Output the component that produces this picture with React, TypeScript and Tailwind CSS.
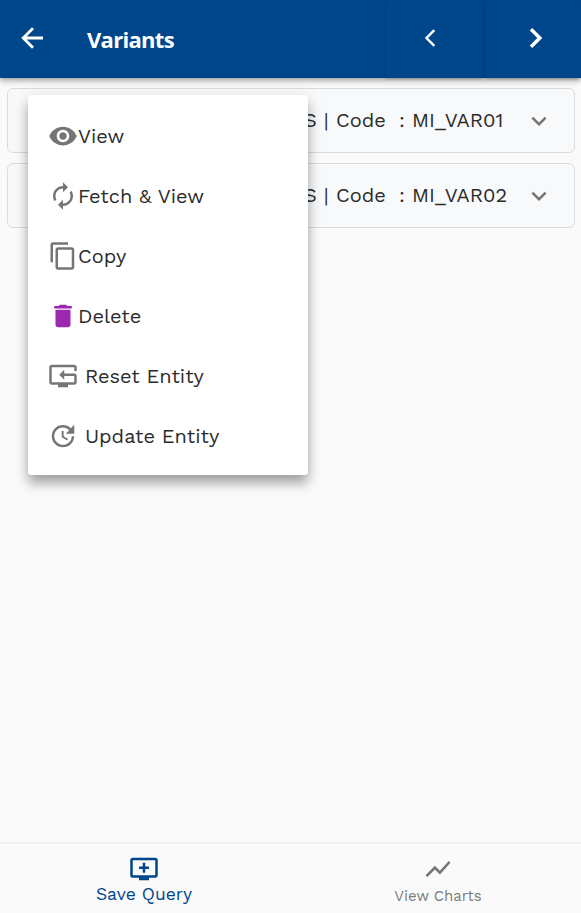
import React from "react";
import {
  MdVisibility, MdAutorenew, MdContentCopy, MdDelete, MdResetTv, MdUpdate,
  MdAddToQueue, MdShowChart, MdExpandMore,
} from "react-icons/md";

const items = [
  { label: "View", icon: MdVisibility, text: "", tint: "text-[#757575]" },
  { label: "Fetch & View", icon: MdAutorenew, text: "", tint: "text-[#757575]" },
  { label: "Copy", icon: MdContentCopy, text: "", tint: "text-[#757575]" },
  { label: "Delete", icon: MdDelete, text: "", tint: "text-[#9c27b0]" },
  { label: "Reset Entity", icon: MdResetTv, text: "ml-[7px]", tint: "text-[#757575]" },
  { label: "Update Entity", icon: MdUpdate, text: "ml-[7px]", tint: "text-[#757575]" },
];

function Variant({ code }: { code: string }) {
  return (
    <div className="flex h-[65px] items-center rounded-[6px] border border-[#d9dbdd] bg-[#f8f9fb] pl-[296px] text-[20px] text-[#2b2b2b]">
      <span className="mt-[-2px] w-[32px] whitespace-pre">S |</span>
      <span className="mt-[-2px] w-[63px]">Code</span>
      <span className="mt-[-2px] w-[13px]">:</span>
      <span className="mt-[-2px] w-[112px] whitespace-nowrap">{code}</span>
      <MdExpandMore className="size-[30px] shrink-0 text-[#757575]" />
    </div>
  );
}

export default function App() {
  return (
    <div className="relative flex h-[913px] w-full flex-col overflow-hidden bg-[#fafafa] font-['Work_Sans',Inter,sans-serif] antialiased">
      <header className="z-10 flex h-[78px] shrink-0 items-center bg-[#00468b] text-white shadow-[0_2px_4px_-1px_rgba(0,0,0,0.2),0_4px_5px_rgba(0,0,0,0.14),0_1px_10px_rgba(0,0,0,0.12)]">
        <svg className="mt-[-2px] ml-4 size-8" viewBox="0 0 32 32" fill="none" stroke="currentColor" strokeWidth="2.8"><path d="M27 16H7.5M17 6.2 7.2 16l9.8 9.8" /></svg>
        <h1 className="ml-[39px] w-[298px] font-['Open_Sans',sans-serif] text-[22px] font-bold tracking-[-0.7px]">Variants</h1>
        <button className="flex h-[78px] w-[99px] items-center justify-center rounded-[4px] pr-[9px] pb-[2px] shadow-[0_1px_3px_rgba(0,0,0,0.2)]">
          <svg className="h-[18px] w-[12px]" viewBox="0 0 12 18" fill="none" stroke="currentColor" strokeWidth="2.4"><path d="M10.3 1.2 2.5 9l7.8 7.8" /></svg>
        </button>
        <button className="ml-px flex h-[78px] flex-1 items-center justify-center rounded-[4px] pb-[2px] pl-[5px] shadow-[0_1px_3px_rgba(0,0,0,0.2)]">
          <svg className="h-[22px] w-[14px]" viewBox="0 0 14 22" fill="none" stroke="currentColor" strokeWidth="3.5"><path d="m2 2.2 8.8 8.8L2 19.8" /></svg>
        </button>
      </header>
      <main className="flex flex-1 flex-col gap-[10px] py-[10px] pr-[6px] pl-[7px]">
        <Variant code="MI_VAR01" />
        <Variant code="MI_VAR02" />
      </main>
      <nav className="flex h-[71px] shrink-0 border-t-2 border-[#f1f1f1]">
        <button className="flex w-[288px] shrink-0 flex-col items-center pt-[10px] text-[#00468b]">
          <MdAddToQueue className="size-[30px]" />
          <span className="mt-[-2px] text-[17.5px] leading-[24px]">Save Query</span>
        </button>
        <button className="flex w-[300px] shrink-0 flex-col items-center pt-[10px] text-[#7c7c7c]">
          <MdShowChart className="size-[30px] text-[#757575]" />
          <span className="text-[15px] leading-[24px]">View Charts</span>
        </button>
      </nav>
      <div className="absolute top-[95px] left-[28px] z-20 h-[380px] w-[280px] rounded-[3px] bg-white py-[11px] shadow-[0_8px_10px_-3px_rgba(0,0,0,0.2),0_10px_12px_1px_rgba(0,0,0,0.14),0_3px_14px_2px_rgba(0,0,0,0.1)]">
        {items.map(({ label, icon: Icon, text, tint }) => (
          <div key={label} className="flex h-[60px] items-center pl-5 text-[20px] text-[#2b2b2b]">
            <Icon className={`size-[30px] shrink-0 ${tint}`} />
            <span className={text}>{label}</span>
          </div>
        ))}
      </div>
    </div>
  );
}
